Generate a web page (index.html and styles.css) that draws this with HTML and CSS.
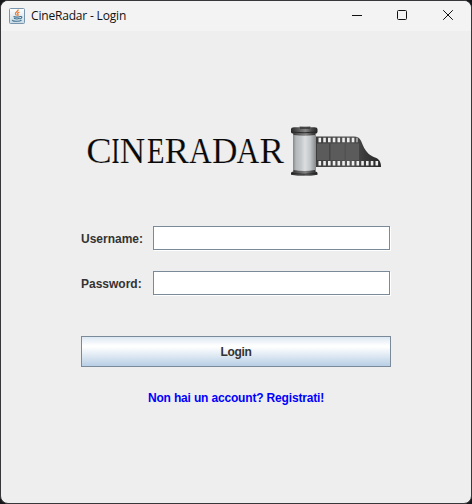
FILE: index.html
```html
<!DOCTYPE html>
<html lang="it">
<head>
<meta charset="utf-8">
<title>CineRadar - Login</title>
<link rel="stylesheet" href="styles.css">
</head>
<body>
<div class="window">
  <header class="titlebar">
    <svg class="app-icon" width="16" height="16" viewBox="0 0 16 16">
      <defs><linearGradient id="tile" x2="0" y2="1"><stop stop-color="#fff"/><stop offset="1" stop-color="#c9dbe7"/></linearGradient></defs>
      <rect x=".5" y=".5" width="15" height="15" rx="1" fill="url(#tile)" stroke="#7895ad"/>
      <path d="M9 1.500c1 2-3.500 2.500-2.500 4.500l1 1.500M10.500 4c-2 .7-2.500 1.500-1.500 2.500.4.600 0 1-.5 1.500" fill="none" stroke="#e8782f" stroke-width="1.300"/>
      <path d="M4.500 8.500c1 .8 5 .8 6.500 0M5 10.300c1.500.7 4 .7 5.500 0M11 8.500c3-.5 2 2-.3 2.500M3.500 12c-1.500 1.500 7.500 1.800 9 .2" fill="none" stroke="#3f718f" stroke-width="1.100"/>
    </svg>
    <span class="title">CineRadar - Login</span>
    <svg class="controls" width="120" height="30" viewBox="0 0 120 30" fill="none" stroke="#111">
      <path d="M7 14.500h10"/>
      <rect x="52.500" y="9.500" width="9" height="9" rx="1"/>
      <path d="M98.200 9.200l9.600 9.600M107.800 9.200l-9.600 9.600"/>
    </svg>
  </header>
  <main class="content">
    <svg class="logo" width="304" height="60" viewBox="84 120 304 60">
      <defs>
        <linearGradient id="can"><stop stop-color="#85888b"/><stop offset=".13" stop-color="#b5b8bb"/><stop offset=".35" stop-color="#c5c8cb"/><stop offset=".52" stop-color="#dcdee0"/><stop offset=".75" stop-color="#c3c6c8"/><stop offset="1" stop-color="#85888b"/></linearGradient>
        <linearGradient id="cap"><stop stop-color="#292929"/><stop offset=".25" stop-color="#555"/><stop offset=".55" stop-color="#858585"/><stop offset=".8" stop-color="#454545"/><stop offset="1" stop-color="#252525"/></linearGradient>
        <linearGradient id="film"><stop stop-color="#3c3c3c"/><stop offset=".5" stop-color="#555"/><stop offset=".75" stop-color="#3a3a3a"/><stop offset="1" stop-color="#282828"/></linearGradient>
      </defs>
      <text class="wordmark" y="163.300"><tspan x="86.300" textLength="25.500" lengthAdjust="spacingAndGlyphs">C</tspan><tspan class="stem" x="111.800" textLength="7.500" lengthAdjust="spacingAndGlyphs">I</tspan><tspan x="119.800" textLength="25.500" lengthAdjust="spacingAndGlyphs">N</tspan><tspan class="bare" x="147" textLength="17.500" lengthAdjust="spacingAndGlyphs">E</tspan><tspan x="164.500" textLength="24.500" lengthAdjust="spacingAndGlyphs">R</tspan><tspan x="189" textLength="22.800" lengthAdjust="spacingAndGlyphs">A</tspan><tspan x="212" textLength="25.500" lengthAdjust="spacingAndGlyphs">D</tspan><tspan x="236.500" textLength="22.800" lengthAdjust="spacingAndGlyphs">A</tspan><tspan x="259.500" textLength="24.500" lengthAdjust="spacingAndGlyphs">R</tspan></text>
      <path d="M316 136.500h38c6 0 7 4 9 9 3 7 7 10 12 12 4 1.500 6 4 6 9.500h-65z" fill="url(#film)"/>
      <path d="M317 143.500h12v16.500h-12zM330.500 143.500h14v16.500h-14zM346 143.500h13v16.500h-13z" fill="#5b5b5b"/>
      <path d="M318.500 140h39" stroke="#eee" stroke-width="4.500" stroke-dasharray="2.600 2.150"/>
      <path d="M318.500 163.300h61" stroke="#eee" stroke-width="4.500" stroke-dasharray="2.600 2.150"/>
      <path d="M293 133h23v40h-23z" fill="url(#can)"/>
      <path d="M291 129q0-1.500 3-1.700h5.500v-.8h11v.8h4q3 .2 3 1.700v3q0 1.500-2.500 1.700v1.300q-10.500 1.500-21.500 0v-1.300q-2.500-.2-2.500-1.700z" fill="url(#cap)"/>
      <path d="M293.500 170q10.500 1.800 21.500 0v1.500q2.500.3 2.500 1.600v1.700q-13 2.500-26.500 0v-1.700q0-1.300 2.500-1.600z" fill="url(#cap)"/>
      <path d="M291.500 132q12.500 1.500 25.500 0M291.500 173.500q12.500 1.500 25.500 0" fill="none" stroke="#222" stroke-width=".9"/>
      <path d="M300 128h10" stroke="#333" stroke-width="1.400"/>
    </svg>
    <form class="form">
      <label class="row"><span class="caption">Username:</span><input class="field" type="text"></label>
      <label class="row"><span class="caption">Password:</span><input class="field" type="password"></label>
      <button class="login" type="button"><span class="login-text">Login</span></button>
      <a class="register"><span class="register-text">Non hai un account? Registrati!</span></a>
    </form>
  </main>
</div>
</body>
</html>
```
FILE: styles.css
```css
* { box-sizing: border-box; }
body { margin: 0; background: #161719; overflow: hidden; }
.window {
  width: 472px;
  height: 504px;
  border: 1px solid #37373a;
  border-radius: 8px;
  overflow: hidden;
  background: #eee;
  display: flex;
  flex-direction: column;
}
.titlebar {
  height: 30px;
  background: #f3f3f3;
  display: flex;
  align-items: center;
  padding-left: 8px;
  flex: none;
}
.title {
  margin-left: 6px;
  font: 12px/16px "Open Sans", "Noto Sans", sans-serif;
  letter-spacing: -.18px;
  color: #111;
}
.controls { margin-left: auto; margin-right: 6px; }
.content { flex: 1; padding: 89px 80px 0; }
.logo { display: block; margin-left: 3px; }
.wordmark {
  font-family: "Liberation Serif", serif;
  font-size: 36px;
  fill: #080808;
  stroke: #eee;
  stroke-width: .2px;
}
.stem { stroke: #080808; }
.bare { stroke: none; }
.form {
  margin-top: 46px;
  display: flex;
  flex-direction: column;
  font: bold 12px/16px "Liberation Sans", Arial, sans-serif;
  color: #333;
}
.row { display: flex; align-items: center; height: 25px; margin-bottom: 20px; }
.caption { width: 72px; }
.field {
  width: 237px;
  height: 24px;
  margin: 0 0 1px;
  padding: 2px 4px;
  border: 1px solid #7a8a99;
  border-radius: 0;
  background: #fff;
  box-shadow: 1px 1px #fff;
  outline: none;
}
.login {
  height: 31px;
  width: 310px;
  margin-top: 20px;
  padding: 0;
  border: 1px solid #7a8a99;
  border-radius: 0;
  background: linear-gradient(#dde8f3, #fff 30%, #fff 34%, #b8cfe5);
  font: inherit;
  letter-spacing: -.3px;
  color: #333;
}
.register { margin-top: 23px; text-align: center; color: #00f; letter-spacing: -.17px; }
```
